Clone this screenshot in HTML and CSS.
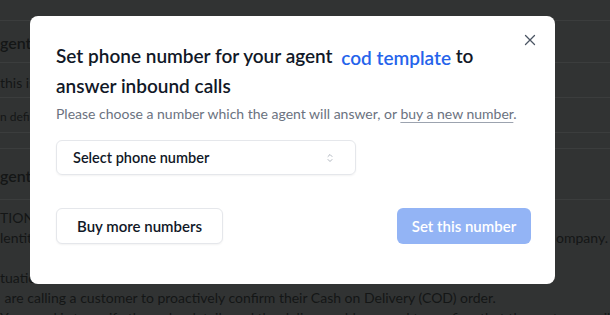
FILE: index.html
```html
<!DOCTYPE html>
<html lang="en">
<head>
<meta charset="utf-8">
<title>Set phone number</title>
<link rel="stylesheet" href="styles.css">
</head>
<body>
<div class="page">
  <div class="row row-top"></div>
  <div class="row row-head">gent</div>
  <div class="row row-text">this is</div>
  <div class="row row-small">n defi</div>
  <div class="row row-gap"></div>
  <div class="row row-head2">gent</div>
  <div class="prompt">
    <div class="pline">TION</div>
    <div class="pline split"><span>lentit</span><span>ompany.</span></div>
    <div class="pline blank"></div>
    <div class="pline">tuatio</div>
    <div class="pline indent"> are calling a customer to proactively confirm their Cash on Delivery (COD) order.</div>
    <div class="pline">Your goal is to verify the order details and the delivery address, and to confirm that the customer will be available.</div>
  </div>
</div>

<div class="overlay">
  <div class="modal" role="dialog">
    <button class="close" aria-label="Close">
      <svg width="12" height="12" viewBox="0 0 12 12"><path d="M1.5 1.5l9 9M10.5 1.5l-9 9" stroke="#4b5563" stroke-width="1.3" stroke-linecap="round" fill="none"/></svg>
    </button>
    <h2 class="title">Set phone number for your agent <span class="agent-name">cod template</span> to answer inbound calls</h2>
    <p class="subtitle">Please choose a number which the agent will answer, or <a class="link">buy a new number</a>.</p>
    <div class="select">
      <span>Select phone number</span>
      <svg width="12" height="12" viewBox="0 0 24 24"><path d="M8 15l4 4 4-4M8 9l4-4 4 4" stroke="#9ca3af" stroke-width="1.6" stroke-linecap="round" stroke-linejoin="round" fill="none"/></svg>
    </div>
    <div class="actions">
      <button class="btn btn-outline">Buy more numbers</button>
      <button class="btn btn-primary" disabled>Set this number</button>
    </div>
  </div>
</div>
</body>
</html>
```

FILE: styles.css
```css
* { box-sizing: border-box; }
html, body { margin: 0; padding: 0; }
body {
  width: 610px;
  height: 315px;
  overflow: hidden;
  background: #313333;
  font-family: "Lato", "Noto Sans", sans-serif;
  color: #141616;
}
.page { display: flex; flex-direction: column; }
.row {
  border-bottom: 1px solid #3b3d3d;
  display: flex;
  align-items: center;
  white-space: nowrap;
}
.row-top { height: 21px; }
.row-head { height: 42px; font-size: 16px; font-weight: 600; padding-top: 2px; }
.row-text { height: 35px; font-size: 14px; padding-top: 4px; }
.row-small { height: 35px; font-size: 12px; padding-top: 2px; }
.row-gap { height: 16px; }
.row-head2 { height: 51px; font-size: 16px; font-weight: 600; padding-top: 2px; }
.prompt { padding-top: 8px; font-size: 14px; line-height: 20px; }
.pline { height: 20px; white-space: pre; overflow: hidden; }
.pline.split { display: flex; justify-content: space-between; padding-right: 2px; }
.pline.indent { padding-left: 1px; }

.overlay {
  position: fixed;
  inset: 0;
  padding: 16px 0 0 30px;
}
.modal {
  position: relative;
  width: 525px;
  height: 268px;
  background: #fff;
  border-radius: 8px;
  padding: 26px 24px 0 26px;
  color: #111827;
}
.close {
  position: absolute;
  top: 17px;
  right: 18px;
  width: 14px;
  height: 14px;
  padding: 0;
  border: 0;
  background: none;
  display: flex;
  align-items: center;
  justify-content: center;
}
.title {
  margin: 0;
  font-size: 19px;
  font-weight: 600;
  line-height: 28px;
  width: 430px;
}
.agent-name {
  color: #2563eb;
  margin-left: 4px;
  vertical-align: -2px;
}
.subtitle {
  margin: 4px 0 0;
  font-size: 14px;
  line-height: 20px;
  color: #6b7280;
  white-space: nowrap;
}
.link {
  color: #6b7280;
  text-decoration: underline;
  text-decoration-color: #9ca3af;
  text-underline-offset: 3px;
}
.select {
  margin-top: 16px;
  width: 300px;
  height: 35px;
  border: 1px solid #e5e7eb;
  border-radius: 6px;
  box-shadow: 0 1px 2px rgba(0,0,0,0.05);
  display: flex;
  align-items: center;
  justify-content: space-between;
  padding: 0 19px 0 16px;
  font-size: 14.5px;
  font-weight: 600;
}
.actions {
  margin-top: 33px;
  display: flex;
  justify-content: space-between;
}
.btn {
  height: 36px;
  border-radius: 6px;
  font-family: inherit;
  font-size: 15px;
  font-weight: 600;
  padding: 0 10px;
  white-space: nowrap;
}
.btn-outline {
  width: 167px;
  background: #fff;
  border: 1px solid #e5e7eb;
  color: #111827;
  box-shadow: 0 1px 2px rgba(0,0,0,0.05);
}
.btn-primary {
  width: 134px;
  background: #93b4f5;
  border: 0;
  color: #fff;
}
```
